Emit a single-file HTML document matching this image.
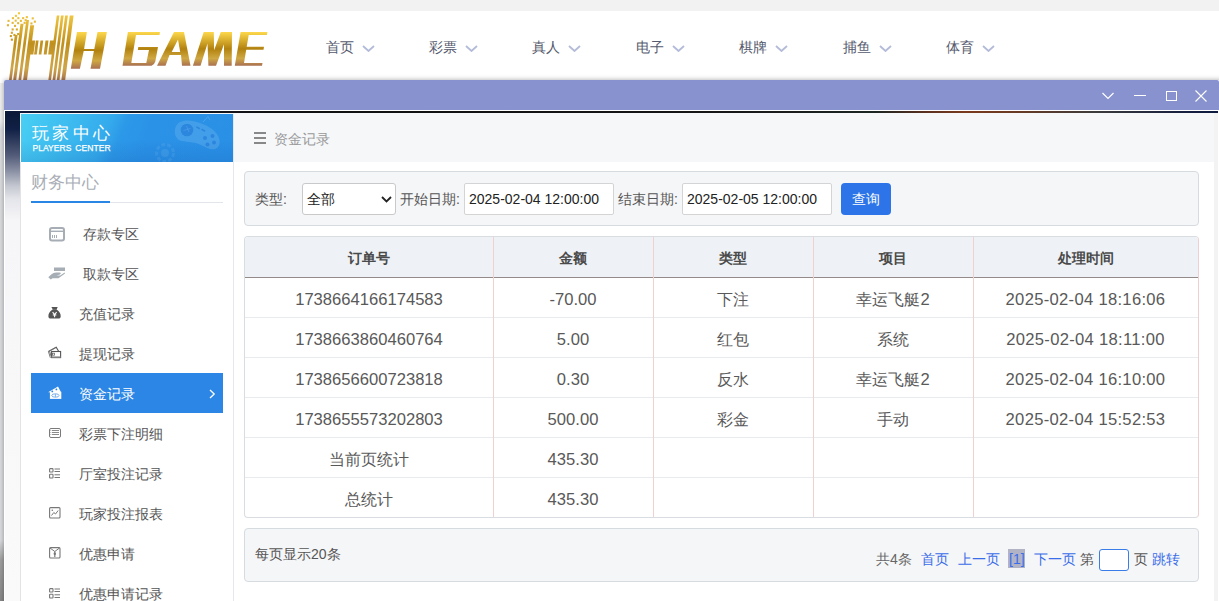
<!DOCTYPE html>
<html><head><meta charset="utf-8">
<style>
*{margin:0;padding:0;box-sizing:border-box;}
html,body{width:1219px;height:601px;overflow:hidden;}
body{font-family:"Liberation Sans",sans-serif;background:linear-gradient(#f0f0f0 0,#f0f0f0 120px,#d9dbde 130px,#d9dbde 540px,#a0a0a0 560px,#888 600px);position:relative;color:#333;}
.a{position:absolute;}
#topbar{left:0;top:0;width:1219px;height:11px;background:#f2f2f2;}
#header{left:0;top:11px;width:1219px;height:72px;background:#fff;}
.nav{position:absolute;top:38.5px;font-size:14px;line-height:17px;color:#555a6e;white-space:nowrap;}
.nav svg{position:absolute;left:36px;top:6px;}
#modal{left:4px;top:80px;width:1220px;height:530px;background:#fff;box-shadow:0 0 5px rgba(0,0,0,.35);border-radius:2px 2px 0 0;}
#mtitle{left:0;top:0;width:1215px;height:30px;background:#8792cf;border-radius:2px 2px 0 0;}
#mbody{left:1px;top:31px;width:1213px;height:500px;background:#fff;overflow:hidden;}
#bgstrip{left:0;top:0;width:16px;height:500px;background:linear-gradient(#0b1836 0,#112046 18px,#3c4766 35px,#545d7a 45px,#8a90a4 60px,#c4c7d0 75px,#e4e5ea 88px,#f6f6f8 110px,#fafafa 500px);}
#bgline{left:0;top:0;width:1213px;height:2px;background:linear-gradient(90deg,#0c1a3a 0,#121826 120px,#111 300px,#161616 700px,#1c2622 870px,#5a3020 920px,#7a3a1e 960px,#6a3a24 1010px,#3c3c3c 1090px,#1a2240 1170px,#0c1a40 1213px);}
#side{left:15px;top:3px;width:214px;height:500px;background:#fff;border-right:1px solid #e4e8ee;}
#sidehead{left:1px;top:0;width:212px;height:48px;background:linear-gradient(to bottom,rgba(0,30,110,0) 0,rgba(0,30,110,0) 55%,rgba(0,30,110,0.10) 100%),linear-gradient(112deg,#48cff4 0%,#3dbcf0 22%,#34aaec 40%,#2c98e8 47%,#2a92e7 60%,#2990e6 100%);overflow:hidden;}
#main{left:229px;top:2px;width:984px;height:500px;background:#fff;}
#crumb{left:0;top:0;width:980px;height:49px;background:#f5f7f9;}
.box{position:absolute;background:#f5f6f8;border:1px solid #d6dbe0;border-radius:4px;}
.lbl{position:absolute;font-size:14px;line-height:16px;color:#555;white-space:nowrap;}
.inp{position:absolute;background:#fff;border:1px solid #d4d4d4;border-radius:2px;font-size:14px;color:#222;line-height:30px;padding-left:4px;white-space:nowrap;}
table{border-collapse:collapse;}
#tbl{position:absolute;left:10px;top:123px;width:955px;height:282px;border:1px solid #d9dde2;border-right-color:#eed0d0;border-radius:4px;overflow:hidden;background:#fff;}

.cell{position:absolute;top:0;height:39px;line-height:44px;text-align:center;font-size:16.6px;color:#595959;white-space:nowrap;}
.vl{position:absolute;top:0;width:1px;height:282px;background:#f3d0d0;}
.cj{font-size:15.5px;}
.hd .cell{font-size:14.4px;font-weight:bold;color:#4a4a4a;line-height:43px;}
.lnk{color:#3a6de8;}
</style></head>
<body>
<div id="topbar" class="a"></div>
<div id="header" class="a"></div>

<!-- logo -->
<svg class="a" style="left:0;top:8px" width="280" height="75" viewBox="0 8 280 75">
  <defs>
    <linearGradient id="gold" x1="0" y1="0" x2="0" y2="1">
      <stop offset="0" stop-color="#fcd449"/>
      <stop offset="0.45" stop-color="#b5850f"/>
      <stop offset="0.75" stop-color="#d3ad45"/>
      <stop offset="1" stop-color="#a87050"/>
    </linearGradient>
    <linearGradient id="gold2" x1="0" y1="12" x2="0" y2="82" gradientUnits="userSpaceOnUse">
      <stop offset="0" stop-color="#f6cc46"/>
      <stop offset="0.45" stop-color="#c0901c"/>
      <stop offset="0.8" stop-color="#cfa648"/>
      <stop offset="1" stop-color="#a87050"/>
    </linearGradient>
    <linearGradient id="gold3" x1="0" y1="32" x2="0" y2="68.7" gradientUnits="userSpaceOnUse">
      <stop offset="0" stop-color="#fdd84c"/>
      <stop offset="0.5" stop-color="#b2820f"/>
      <stop offset="0.78" stop-color="#cfa843"/>
      <stop offset="1" stop-color="#a97152"/>
    </linearGradient>
    <linearGradient id="gold4" x1="0" y1="32" x2="0" y2="65.8" gradientUnits="userSpaceOnUse">
      <stop offset="0" stop-color="#fdd84c"/>
      <stop offset="0.5" stop-color="#b2820f"/>
      <stop offset="0.78" stop-color="#cfa843"/>
      <stop offset="1" stop-color="#a97152"/>
    </linearGradient>
  </defs>
  <g fill="url(#gold2)">
<polygon points="14.85,35.00 17.55,35.00 11.44,82.00 8.74,82.00"/>
<polygon points="20.51,23.80 23.51,23.80 15.94,82.00 12.94,82.00"/>
<polygon points="26.31,19.90 29.01,19.90 20.94,82.00 18.24,82.00"/>
<polygon points="30.21,25.30 34.11,25.30 26.74,82.00 22.84,82.00"/>
<polygon points="56.77,15.60 59.37,15.60 50.74,82.00 48.14,82.00"/>
<polygon points="60.97,15.60 63.67,15.60 55.04,82.00 52.34,82.00"/>
<polygon points="65.17,15.60 67.87,15.60 59.24,82.00 56.54,82.00"/>
<polygon points="69.77,15.60 73.57,15.60 64.94,82.00 61.14,82.00"/>
<polygon points="31.20,40.6 35.20,40.6 33.40,54.4 29.40,54.4"/>
<polygon points="35.90,40.6 38.60,40.6 36.80,54.4 34.10,54.4"/>
<polygon points="40.50,40.6 43.20,40.6 41.40,54.4 38.70,54.4"/>
<polygon points="45.50,40.6 48.50,40.6 46.70,54.4 43.70,54.4"/>
<polygon points="50.00,40.6 54.60,40.6 52.80,54.4 48.20,54.4"/>
<rect x="17.9" y="12.2" width="2.1" height="2.1"/>
<rect x="14.9" y="14.8" width="2.1" height="2.1"/>
<rect x="11.9" y="17.1" width="2.1" height="2.1"/>
<rect x="17.3" y="17.1" width="2.1" height="2.1"/>
<rect x="22.1" y="17.1" width="2.1" height="2.1"/>
<rect x="25.8" y="16.1" width="2.1" height="2.1"/>
<rect x="31.7" y="17.3" width="2.1" height="2.1"/>
<rect x="7.5" y="19.8" width="2.1" height="2.1"/>
<rect x="14.6" y="19.6" width="2.1" height="2.1"/>
<rect x="19.8" y="19.8" width="2.1" height="2.1"/>
<rect x="24.6" y="19.1" width="2.1" height="2.1"/>
<rect x="33.8" y="20.6" width="2.1" height="2.1"/>
<rect x="11.6" y="21.8" width="2.1" height="2.1"/>
<rect x="17.1" y="22.1" width="2.1" height="2.1"/>
<rect x="23.6" y="21.8" width="2.1" height="2.1"/>
<rect x="30.4" y="22.4" width="2.1" height="2.1"/>
<rect x="6.9" y="24.2" width="2.1" height="2.1"/>
<rect x="14.0" y="24.8" width="2.1" height="2.1"/>
<rect x="11.6" y="28.4" width="2.1" height="2.1"/>
<rect x="15.8" y="28.4" width="2.1" height="2.1"/>
<rect x="10.8" y="31.7" width="2.1" height="2.1"/>
<rect x="17.1" y="33.0" width="2.1" height="2.1"/>
<rect x="9.8" y="35.0" width="2.1" height="2.1"/>
<rect x="13.4" y="33.9" width="2.1" height="2.1"/>
<rect x="10.8" y="38.6" width="2.1" height="2.1"/>
</g>
  <g fill="url(#gold3)">
    <!-- H -->
    <polygon points="77,32 86.9,32 84.1,48.9 94.3,48.9 97.5,32 106.9,32 100,68.7 90.5,68.7 93.9,51.1 83.7,51.1 79.9,68.7 70.8,68.7"/>
  </g>
  <g fill="url(#gold4)">
    <!-- G -->
    <polygon points="127.9,32 160,32 159.5,35 136,35 131.3,62.9 146.3,62.9 149,50 137.8,50 138.3,47 158,47 155.3,61.5 154,64 151.5,65.8 122.5,65.8"/>
    <!-- A -->
    <polygon points="174,32 184,32 190.5,65.8 182,65.8 181,55 169.5,55 165.5,65.8 157,65.8"/>
    <!-- M -->
    <polygon points="192.9,65.8 203.7,32.1 213.8,32.1 214.1,50.3 220.8,32.1 232,32.1 231.7,65.8 224,65.8 224,44.2 216,65.8 208.4,65.8 207.5,43.6 200.5,65.8"/>
    <!-- E -->
    <polygon points="240.6,32 267.4,32 266.9,35 248.7,35 246.7,46.8 264,46.8 263.5,49.8 246.2,49.8 244,62.9 262.5,62.9 262,65.8 234.8,65.8"/>
  </g>
  <g fill="#fff">
    <polygon points="178,39.6 180.2,52 171.7,52"/>
  </g>
</svg>

<div class="nav" style="left:326px">首页<svg width="13" height="7" viewBox="0 0 13 7"><path d="M1 1 L6.5 6 L12 1" fill="none" stroke="#b3bbd9" stroke-width="1.8"/></svg></div>
<div class="nav" style="left:429px">彩票<svg width="13" height="7" viewBox="0 0 13 7"><path d="M1 1 L6.5 6 L12 1" fill="none" stroke="#b3bbd9" stroke-width="1.8"/></svg></div>
<div class="nav" style="left:532px">真人<svg width="13" height="7" viewBox="0 0 13 7"><path d="M1 1 L6.5 6 L12 1" fill="none" stroke="#b3bbd9" stroke-width="1.8"/></svg></div>
<div class="nav" style="left:636px">电子<svg width="13" height="7" viewBox="0 0 13 7"><path d="M1 1 L6.5 6 L12 1" fill="none" stroke="#b3bbd9" stroke-width="1.8"/></svg></div>
<div class="nav" style="left:739px">棋牌<svg width="13" height="7" viewBox="0 0 13 7"><path d="M1 1 L6.5 6 L12 1" fill="none" stroke="#b3bbd9" stroke-width="1.8"/></svg></div>
<div class="nav" style="left:843px">捕鱼<svg width="13" height="7" viewBox="0 0 13 7"><path d="M1 1 L6.5 6 L12 1" fill="none" stroke="#b3bbd9" stroke-width="1.8"/></svg></div>
<div class="nav" style="left:946px">体育<svg width="13" height="7" viewBox="0 0 13 7"><path d="M1 1 L6.5 6 L12 1" fill="none" stroke="#b3bbd9" stroke-width="1.8"/></svg></div>

<div id="modal" class="a">
  <div id="mtitle" class="a">
    <svg class="a" style="left:1098px;top:12px" width="12" height="8" viewBox="0 0 12 8"><path d="M0.5 1 L6 6.5 L11.5 1" fill="none" stroke="#fff" stroke-width="1.2"/></svg>
    <div class="a" style="left:1130px;top:15px;width:12px;height:1.3px;background:#fff"></div>
    <div class="a" style="left:1162px;top:11px;width:11px;height:10px;border:1.2px solid #fff"></div>
    <svg class="a" style="left:1191px;top:10px" width="12" height="12" viewBox="0 0 12 12"><path d="M0.5 0.5 L11.5 11.5 M11.5 0.5 L0.5 11.5" fill="none" stroke="#fff" stroke-width="1.1"/></svg>
  </div>
  <div id="mbody" class="a">
    <div id="bgstrip" class="a"></div>
    <div id="bgline" class="a"></div>
    <div class="a" style="left:15px;top:2px;width:214px;height:1px;background:#f4f6fa"></div>
    <div id="side" class="a">
      <div class="a" style="left:0;top:48px;width:1px;height:460px;background:#e3e3e3"></div>
      <div id="sidehead" class="a">
        <div class="a" style="left:10.5px;top:9.5px;font-size:17px;line-height:20px;color:#fff;letter-spacing:3.6px;white-space:nowrap">玩家中心</div>
        <div class="a" style="left:11.5px;top:30px;font-size:8.5px;line-height:9px;color:#fff;white-space:nowrap;letter-spacing:0.05px;word-spacing:1.5px;-webkit-text-stroke:0.25px #fff">PLAYERS CENTER</div>
        <svg class="a" style="left:129px;top:0" width="83" height="48" viewBox="0 0 83 48">
          <g fill="#fff" opacity="0.12">
            <path d="M30 8 C38 4 52 8 62 15 C70 21 72 30 67 34 C63 37 57 34 51 31 C45 28 38 28 32 27 C26 26 24 20 25 15 C26 11 28 9 30 8 Z"/>
          </g>
          <circle cx="15" cy="39" r="8.5" fill="none" stroke="#fff" stroke-opacity="0.07" stroke-width="3" stroke-dasharray="4 2"/>
          <circle cx="15" cy="39" r="4" fill="#fff" fill-opacity="0.08"/>
          <g fill="#1a74d6" opacity="0.55">
            <circle cx="37" cy="16" r="6.3"/>
            <circle cx="55" cy="24" r="2"/><circle cx="62.5" cy="22" r="2"/><circle cx="57.5" cy="30.5" r="2"/><circle cx="64" cy="28.5" r="2"/>
            <rect x="46" y="13" width="4" height="1.6" transform="rotate(28 48 14)"/>
            <rect x="51.5" y="15.5" width="4" height="1.6" transform="rotate(28 53.5 16)"/>
          </g>
          <path d="M36.5 12 L39 18 M33.5 16.5 L40.5 14.5" stroke="#5aa8f0" stroke-opacity="0.5" stroke-width="1"/>
          <path d="M53 8 L58 2.5 L60 6" fill="none" stroke="#fff" stroke-opacity="0.15" stroke-width="1"/>
        </svg>
      </div>
      <div class="a" style="left:11px;top:59px;font-size:17px;line-height:20px;color:#a9aeb6;white-space:nowrap">财务中心</div>
      <div class="a" style="left:11px;top:88px;width:192px;height:1px;background:#e2e5ea"></div>
      <div class="a" style="left:11px;top:87px;width:79px;height:2px;background:#2a86e4"></div>

      <!-- menu -->
      <div class="a" style="left:11px;top:259px;width:192px;height:40px;background:#2b86e5"></div>

      <svg class="a" style="left:29px;top:113px" width="16" height="15" viewBox="0 0 16 15">
        <rect x="1" y="1" width="14" height="12.6" rx="2" fill="none" stroke="#a6adb5" stroke-width="2"/>
        <rect x="1" y="3.6" width="14" height="1.4" fill="#a6adb5"/>
        <rect x="3" y="8" width="1" height="3" fill="#a6adb5"/><rect x="5" y="8" width="1" height="3" fill="#a6adb5"/><rect x="7" y="8" width="1" height="3" fill="#a6adb5"/>
      </svg>
      <svg class="a" style="left:28px;top:153px" width="18" height="13" viewBox="0 0 18 13">
        <rect x="6" y="0.5" width="11" height="3.5" fill="#a6adb5"/>
        <path d="M0.3 10.3 L2.8 12.6 L4.6 11.2 L10.5 11.2 L17 6.6 L16.6 5.6 L12.2 8.4 L8.6 8.4 L12 7.4 C13.1 7 13 5.6 11.8 5.6 L8.2 5.6 C6.2 5.6 4.8 6.4 3.2 7.6 Z" fill="#a6adb5"/>
      </svg>
      
      
      
      <svg class="a" style="left:26px;top:189px" width="18" height="18" viewBox="0 0 18 18">
        <path d="M5.4 3.9 L11.7 3.9 L10.5 6.8 L6.9 6.8 Z" fill="#555"/>
        <path d="M6.6 6.4 L10.6 6.4 C13.5 8 14.9 10.8 14.7 13.6 C14.6 15 13.8 15.6 12.5 15.6 L4.6 15.6 C3.3 15.6 2.5 15 2.4 13.6 C2.2 10.8 3.6 8 6.6 6.4 Z" fill="#555"/>
        <path d="M6.6 9.2 L8.6 11.6 L10.6 9.2 M8.6 11.6 L8.6 14.2 M6.8 12 L10.4 12" fill="none" stroke="#fff" stroke-width="1.1"/>
      </svg>
      <svg class="a" style="left:26px;top:230px" width="18" height="18" viewBox="0 0 18 18">
        <path d="M2.4 7.4 L10.2 3.2 L12.6 7.2" fill="none" stroke="#555" stroke-width="1.1"/>
        <path d="M3.4 7 L9.8 3.6" fill="none" stroke="#777" stroke-width="0.8"/>
        <path d="M2.4 7.4 L4.4 13.8 M3.6 7.2 L5 12" fill="none" stroke="#666" stroke-width="0.9"/>
        <rect x="5.6" y="7.5" width="9" height="6.1" fill="none" stroke="#555" stroke-width="1.1"/>
        <rect x="5.6" y="12.4" width="9" height="1.4" fill="#888"/>
        <rect x="6.4" y="9.2" width="2" height="2" fill="none" stroke="#666" stroke-width="0.8"/>
      </svg>
      <svg class="a" style="left:26px;top:269px" width="18" height="18" viewBox="0 0 18 18">
        <path d="M2.1 9.2 L12 3.6 L15 9.3 Z" fill="#fff"/>
        <rect x="3.9" y="8.8" width="11.4" height="7.1" fill="#fff"/>
        <circle cx="6.3" cy="8.4" r="0.9" fill="#2b86e5"/>
        <circle cx="10.4" cy="6.4" r="0.9" fill="#2b86e5"/>
        <ellipse cx="9.4" cy="12.5" rx="3.6" ry="1.7" fill="none" stroke="#2b86e5" stroke-width="0.8" stroke-opacity="0.8"/>
        <path d="M9.4 11.2 L9.4 13.8" stroke="#2b86e5" stroke-width="0.8" stroke-opacity="0.8"/>
      </svg>
      <svg class="a" style="left:29px;top:314px" width="12" height="10" viewBox="0 0 12 10">
        <rect x="0.5" y="0.5" width="11" height="9" rx="1.5" fill="none" stroke="#7a7a7a" stroke-width="1"/>
        <path d="M3 2.5 L10 2.5 M3 4.5 L10 4.5 M3 6.5 L10 6.5" stroke="#8a8a8a" stroke-width="1"/>
        <path d="M1.5 2.5 L2.2 2.5 M1.5 4.5 L2.2 4.5 M1.5 6.5 L2.2 6.5" stroke="#8a8a8a" stroke-width="1"/>
      </svg>
      <svg class="a" style="left:29px;top:354px" width="12" height="11" viewBox="0 0 12 11">
        <rect x="0.6" y="0.6" width="3.4" height="3.4" rx="0.6" fill="none" stroke="#777" stroke-width="1.1"/>
        <rect x="0.6" y="6.2" width="3.4" height="3.8" rx="0.6" fill="none" stroke="#777" stroke-width="1.1"/>
        <path d="M5.5 1 L11 1 M5.5 3.5 L11 3.5 M5.5 6.8 L11 6.8 M5.5 9.5 L11 9.5" stroke="#777" stroke-width="1"/>
      </svg>
      <svg class="a" style="left:29px;top:393px" width="12" height="12" viewBox="0 0 12 12">
        <rect x="0.6" y="0.6" width="10.4" height="10.4" rx="1" fill="none" stroke="#777" stroke-width="1.1"/>
        <path d="M2.5 8.5 L4.8 5.5 L6.5 7 L9.2 3.5" fill="none" stroke="#777" stroke-width="1"/>
        <circle cx="3.3" cy="3.2" r="0.8" fill="#777"/>
      </svg>
      <svg class="a" style="left:29px;top:433px" width="12" height="12" viewBox="0 0 12 12">
        <rect x="0.6" y="0.6" width="10.4" height="10.4" rx="1" fill="none" stroke="#777" stroke-width="1.1"/>
        <path d="M1 1 L5.8 4.5 L10.5 1" fill="none" stroke="#777" stroke-width="1"/>
        <path d="M5.8 4.5 L5.8 10" stroke="#777" stroke-width="1.2"/>
        <circle cx="5.8" cy="6.8" r="1.2" fill="#777"/>
      </svg>
      <svg class="a" style="left:29px;top:474px" width="12" height="11" viewBox="0 0 12 11">
        <rect x="0.6" y="0.6" width="3.4" height="3.4" rx="0.6" fill="none" stroke="#777" stroke-width="1.1"/>
        <rect x="0.6" y="6.2" width="3.4" height="3.8" rx="0.6" fill="none" stroke="#777" stroke-width="1.1"/>
        <path d="M5.5 1 L11 1 M5.5 3.5 L11 3.5 M5.5 6.8 L11 6.8 M5.5 9.5 L11 9.5" stroke="#777" stroke-width="1"/>
      </svg>

      <div class="a" style="left:63px;top:112px;font-size:14px;line-height:16px;color:#555;white-space:nowrap">存款专区</div>
      <div class="a" style="left:63px;top:152px;font-size:14px;line-height:16px;color:#555;white-space:nowrap">取款专区</div>
      <div class="a" style="left:59px;top:192px;font-size:14px;line-height:16px;color:#555;white-space:nowrap">充值记录</div>
      <div class="a" style="left:59px;top:232px;font-size:14px;line-height:16px;color:#555;white-space:nowrap">提现记录</div>
      <div class="a" style="left:59px;top:272px;font-size:14px;line-height:16px;color:#fff;white-space:nowrap">资金记录</div>
      <svg class="a" style="left:189px;top:275px" width="7" height="10" viewBox="0 0 7 10"><path d="M1 1 L5.2 5 L1 9" fill="none" stroke="#fff" stroke-width="1.3"/></svg>
      <div class="a" style="left:59px;top:312px;font-size:14px;line-height:16px;color:#555;white-space:nowrap">彩票下注明细</div>
      <div class="a" style="left:59px;top:352px;font-size:14px;line-height:16px;color:#555;white-space:nowrap">厅室投注记录</div>
      <div class="a" style="left:59px;top:392px;font-size:14px;line-height:16px;color:#555;white-space:nowrap">玩家投注报表</div>
      <div class="a" style="left:59px;top:432px;font-size:14px;line-height:16px;color:#555;white-space:nowrap">优惠申请</div>
      <div class="a" style="left:59px;top:472px;font-size:14px;line-height:16px;color:#555;white-space:nowrap">优惠申请记录</div>
    </div>

    <div id="main" class="a">
      <div id="crumb" class="a">
        <div class="a" style="left:20px;top:19px;width:12px;height:2px;background:#888"></div>
        <div class="a" style="left:20px;top:24px;width:12px;height:2px;background:#888"></div>
        <div class="a" style="left:20px;top:29px;width:12px;height:2px;background:#888"></div>
        <div class="a" style="left:40px;top:18px;font-size:14px;line-height:16px;color:#999;white-space:nowrap">资金记录</div>
      </div>
      <div class="box" style="left:10px;top:58px;width:955px;height:55px;">
        <div class="lbl" style="left:10px;top:19px">类型:</div>
        <div class="inp" style="left:57px;top:11px;width:94px;height:32px;border-color:#c9c9c9;border-radius:3px">全部
          <svg class="a" style="left:78px;top:12px" width="11" height="7" viewBox="0 0 11 7"><path d="M1 1 L5.5 5.5 L10 1" fill="none" stroke="#222" stroke-width="1.8"/></svg>
        </div>
        <div class="lbl" style="left:155px;top:19px">开始日期:</div>
        <div class="inp" style="left:219px;top:11px;width:150px;height:32px">2025-02-04 12:00:00</div>
        <div class="lbl" style="left:373px;top:19px">结束日期:</div>
        <div class="inp" style="left:437px;top:11px;width:150px;height:32px">2025-02-05 12:00:00</div>
        <div class="a" style="left:596px;top:11px;width:50px;height:32px;background:#2c74e8;border-radius:4px;color:#fff;font-size:14px;line-height:32px;text-align:center">查询</div>
      </div>
<div id="tbl">
<div class="a" style="left:0;top:0;width:953px;height:40px;background:#eef2f6"></div>
<div class="hd"><div class="cell cj" style="left:0px;width:248px">订单号</div><div class="cell cj" style="left:248px;width:160px">金额</div><div class="cell cj" style="left:408px;width:160px">类型</div><div class="cell cj" style="left:568px;width:160px">项目</div><div class="cell cj" style="left:728px;width:225px">处理时间</div></div>
<div class="a" style="left:0;top:40px;width:953px;height:1px;background:#958a8a"></div>
<div class="row2" style="position:absolute;left:0;top:41px;width:953px;height:39px"><div class="cell" style="left:0px;width:248px">1738664166174583</div><div class="cell" style="left:248px;width:160px">-70.00</div><div class="cell cj" style="left:408px;width:160px">下注</div><div class="cell cj" style="left:568px;width:160px">幸运飞艇<span style="font-size:16.6px">2</span></div><div class="cell" style="left:728px;width:225px;letter-spacing:0.3px">2025-02-04 18:16:06</div></div>
<div class="a" style="left:0;top:80px;width:953px;height:1px;background:#e9ecef"></div>
<div class="row2" style="position:absolute;left:0;top:81px;width:953px;height:39px"><div class="cell" style="left:0px;width:248px">1738663860460764</div><div class="cell" style="left:248px;width:160px">5.00</div><div class="cell cj" style="left:408px;width:160px">红包</div><div class="cell cj" style="left:568px;width:160px">系统</div><div class="cell" style="left:728px;width:225px;letter-spacing:0.3px">2025-02-04 18:11:00</div></div>
<div class="a" style="left:0;top:120px;width:953px;height:1px;background:#e9ecef"></div>
<div class="row2" style="position:absolute;left:0;top:121px;width:953px;height:39px"><div class="cell" style="left:0px;width:248px">1738656600723818</div><div class="cell" style="left:248px;width:160px">0.30</div><div class="cell cj" style="left:408px;width:160px">反水</div><div class="cell cj" style="left:568px;width:160px">幸运飞艇<span style="font-size:16.6px">2</span></div><div class="cell" style="left:728px;width:225px;letter-spacing:0.3px">2025-02-04 16:10:00</div></div>
<div class="a" style="left:0;top:160px;width:953px;height:1px;background:#e9ecef"></div>
<div class="row2" style="position:absolute;left:0;top:161px;width:953px;height:39px"><div class="cell" style="left:0px;width:248px">1738655573202803</div><div class="cell" style="left:248px;width:160px">500.00</div><div class="cell cj" style="left:408px;width:160px">彩金</div><div class="cell cj" style="left:568px;width:160px">手动</div><div class="cell" style="left:728px;width:225px;letter-spacing:0.3px">2025-02-04 15:52:53</div></div>
<div class="a" style="left:0;top:200px;width:953px;height:1px;background:#e9ecef"></div>
<div class="row2" style="position:absolute;left:0;top:201px;width:953px;height:39px"><div class="cell cj" style="left:0px;width:248px">当前页统计</div><div class="cell" style="left:248px;width:160px">435.30</div><div class="cell" style="left:408px;width:160px"></div><div class="cell" style="left:568px;width:160px"></div><div class="cell" style="left:728px;width:225px"></div></div>
<div class="a" style="left:0;top:240px;width:953px;height:1px;background:#e9ecef"></div>
<div class="row2" style="position:absolute;left:0;top:241px;width:953px;height:39px"><div class="cell cj" style="left:0px;width:248px">总统计</div><div class="cell" style="left:248px;width:160px">435.30</div><div class="cell" style="left:408px;width:160px"></div><div class="cell" style="left:568px;width:160px"></div><div class="cell" style="left:728px;width:225px"></div></div>
<div class="vl" style="left:248px"></div>
<div class="vl" style="left:408px"></div>
<div class="vl" style="left:568px"></div>
<div class="vl" style="left:728px"></div>
</div>
<div class="box" style="left:10px;top:415px;width:955px;height:54px;">
  <div class="lbl" style="left:10px;top:17px;color:#555">每页显示20条</div>
  <div class="lbl" style="left:631px;top:22px;color:#666">共4条</div>
  <div class="lbl lnk" style="left:676px;top:22px">首页</div>
  <div class="lbl lnk" style="left:713px;top:22px">上一页</div>
  <div class="a" style="left:763px;top:20px;width:17px;height:19px;background:#b3b3c6"></div>
  <div class="lbl lnk" style="left:764px;top:22px">[1]</div>
  <div class="lbl lnk" style="left:789px;top:22px">下一页</div>
  <div class="lbl" style="left:835px;top:22px;color:#555">第</div>
  <div class="a" style="left:854px;top:20px;width:30px;height:22px;background:#fff;border:1px solid #3b7de8;border-radius:3px"></div>
  <div class="lbl" style="left:889px;top:22px;color:#555">页</div>
  <div class="lbl lnk" style="left:907px;top:22px">跳转</div>
</div>
<div class="a" style="left:980px;top:0;width:6px;height:501px;background:#f3f3f3"></div>

    </div>
  </div>
</div>
</body></html>
